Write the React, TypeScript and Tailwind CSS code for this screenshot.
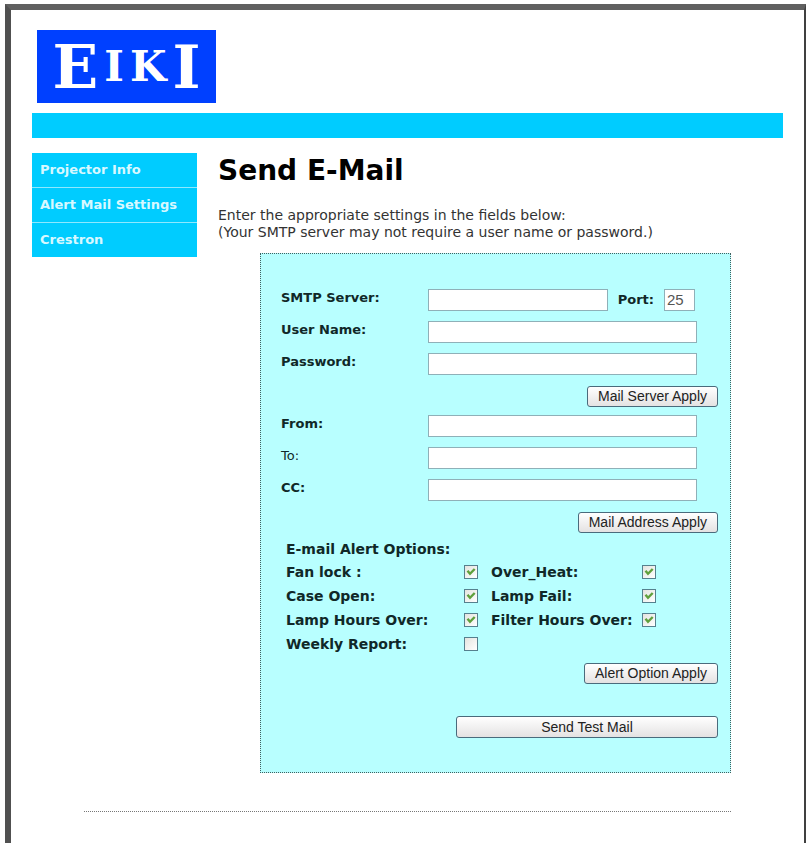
import type { ReactNode } from "react";

type Option = { id: string; label: string; checked: boolean };

const navItems = ["Projector Info", "Alert Mail Settings", "Crestron"];

const addressFields = [
  { id: "from", label: "From:", bold: true },
  { id: "to", label: "To:", bold: false },
  { id: "cc", label: "CC:", bold: true },
];

const options: Option[] = [
  { id: "fan-lock", label: "Fan lock :", checked: true },
  { id: "over-heat", label: "Over_Heat:", checked: true },
  { id: "case-open", label: "Case Open:", checked: true },
  { id: "lamp-fail", label: "Lamp Fail:", checked: true },
  { id: "lamp-hours", label: "Lamp Hours Over:", checked: true },
  { id: "filter-hours", label: "Filter Hours Over:", checked: true },
  { id: "weekly", label: "Weekly Report:", checked: false },
];

const inputClass =
  "h-[22px] min-w-0 border border-[#8fb0b8] bg-white px-[2px] font-['Liberation_Sans',sans-serif] text-[15px] text-[#555] outline-none";

function Logo() {
  return (
    <div
      aria-label="EIKI"
      className="ml-[5px] flex h-[73px] w-[179px] items-center justify-center gap-[6px] bg-[#0040ff] font-['DejaVu_Serif',serif] font-bold leading-none text-white"
    >
      <span className="text-[60px]">E</span>
      <span className="text-[42px]">I</span>
      <span className="text-[42px]">K</span>
      <span className="text-[60px]">I</span>
    </div>
  );
}

function Field({ id, label, bold = true, type = "text", children }: {
  id: string; label: string; bold?: boolean; type?: string; children?: ReactNode;
}) {
  return (
    <div className="flex items-start">
      <label htmlFor={id} className={`w-[147px] shrink-0 text-[13px] leading-[18px] ${bold ? "font-bold" : ""}`}>
        {label}
      </label>
      <div className="mr-[21px] flex min-w-0 flex-1 items-center">
        <input id={id} type={type} className={`${inputClass} flex-1`} />
        {children}
      </div>
    </div>
  );
}

function FormButton({ wide = false, children }: { wide?: boolean; children: ReactNode }) {
  return (
    <button
      type="button"
      className={`rounded-[3px] border border-[#4a6b7c] bg-linear-to-b from-white to-[#e4e2e2] px-[10px] font-['Liberation_Sans',sans-serif] text-sm leading-[19px] text-[#222] ${
        wide ? "h-[22px] w-[262px]" : "h-[21px]"
      }`}
    >
      {children}
    </button>
  );
}

function CheckOption({ option }: { option: Option }) {
  return (
    <>
      <label htmlFor={option.id} className="whitespace-nowrap">{option.label}</label>
      <span className="grid size-[14px]">
        <input
          id={option.id}
          type="checkbox"
          defaultChecked={option.checked}
          className="peer col-start-1 row-start-1 size-[14px] appearance-none border border-[#56808e] bg-linear-to-br from-[#e4e4df] to-white"
        />
        <svg
          viewBox="0 0 14 14"
          className="pointer-events-none invisible col-start-1 row-start-1 size-[14px] peer-checked:visible"
          fill="none"
          stroke="#5fa03c"
          strokeWidth="2.4"
        >
          <path d="M3.5 5.8 6 8.8 10.7 4" />
        </svg>
      </span>
    </>
  );
}

export default function App() {
  return (
    <div className="flex min-h-screen flex-col bg-white pl-[5px] pt-1 font-['DejaVu_Sans',Verdana,sans-serif] text-black">
      <div className="flex-1 border-l-6 border-r-2 border-t-6 border-l-[#505050] border-r-[#404040] border-t-[#606060] px-[21px] pb-8 pt-5">
        <header>
          <Logo />
          <div className="mt-[10px] h-[25px] bg-[#00ccff]" />
        </header>

        <div className="mt-[15px] flex items-start gap-[21px]">
          <nav className="flex w-[165px] shrink-0 flex-col gap-px bg-[#8fe8ff]">
            {navItems.map((item) => (
              <a key={item} href="#" className="bg-[#00ccff] pl-2 text-[13px] font-bold leading-[34px] text-[#d8f8ff]">
                {item}
              </a>
            ))}
          </nav>

          <main className="min-w-0 flex-1 pr-[52px]">
            <h1 className="text-[28px] font-bold leading-9">Send E-Mail</h1>
            <p className="mt-[18px] text-sm leading-[17px] text-[#333]">
              Enter the appropriate settings in the fields below:
              <br />
              (Your SMTP server may not require a user name or password.)
            </p>

            <form className="ml-[42px] mt-[12px] border border-dotted border-[#406060] bg-[#b8ffff] pb-[34px] pl-5 pr-3 pt-[35px] text-[#102828]">
              <div className="flex flex-col gap-[10px]">
                <Field id="smtp" label="SMTP Server:">
                  <label htmlFor="port" className="mx-[10px] text-[13px] font-bold">Port:</label>
                  <input id="port" defaultValue="25" className={`${inputClass} mr-[2px] w-[31px]`} />
                </Field>
                <Field id="user" label="User Name:" />
                <Field id="password" label="Password:" type="password" />
              </div>
              <div className="mt-[11px] flex justify-end">
                <FormButton>Mail Server Apply</FormButton>
              </div>

              <div className="mt-2 flex flex-col gap-[10px]">
                {addressFields.map((f) => (
                  <Field key={f.id} id={f.id} label={f.label} bold={f.bold} />
                ))}
              </div>
              <div className="mt-[11px] flex justify-end">
                <FormButton>Mail Address Apply</FormButton>
              </div>

              <fieldset className="ml-[5px] mt-[5px] text-sm font-bold">
                <legend className="leading-[22px]">E-mail Alert Options:</legend>
                <div className="grid auto-rows-[24px] grid-cols-[178px_27px_151px_14px] items-center">
                  {options.map((o) => (
                    <CheckOption key={o.id} option={o} />
                  ))}
                </div>
              </fieldset>
              <div className="mt-[7px] flex justify-end">
                <FormButton>Alert Option Apply</FormButton>
              </div>

              <div className="mt-8 flex justify-end">
                <FormButton wide>Send Test Mail</FormButton>
              </div>
            </form>
          </main>
        </div>

        <hr className="ml-[52px] mr-[52px] mt-[38px] border-t border-dotted border-[#777]" />
      </div>
    </div>
  );
}
